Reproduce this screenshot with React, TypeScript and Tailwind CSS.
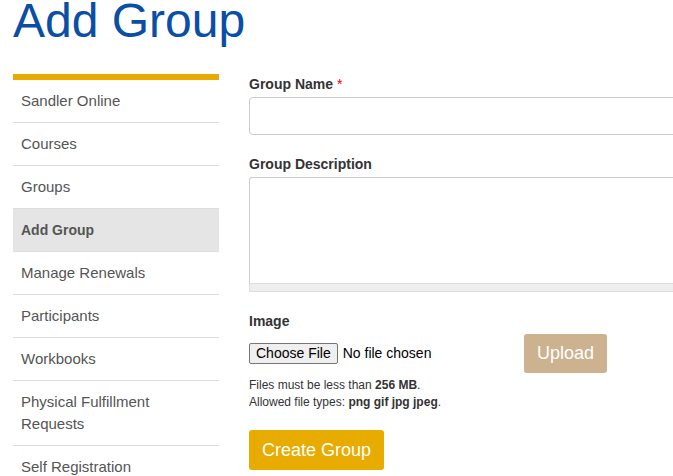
import React from "react";

const items = [
  "Sandler Online",
  "Courses",
  "Groups",
  "Add Group",
  "Manage Renewals",
  "Participants",
  "Workbooks",
  "Physical Fulfillment Requests",
  "Self Registration",
];

export default function App() {
  return (
    <div
      className="w-[673px] h-[476px] overflow-hidden bg-white"
      style={{ fontFamily: '"Liberation Sans", Arial, sans-serif' }}
    >
      <h1 className="ml-[13px] text-[48px] leading-[42px] text-[#0a4ea6] font-normal whitespace-nowrap">
        Add Group
      </h1>
      <div className="flex mt-[32px] ml-[13px]">
        <div className="w-[206px] shrink-0">
          <div className="h-[6px] bg-[#e8a900]" />
          {items.map((it) => (
            <div
              key={it}
              className={
                it === "Add Group"
                  ? "px-2 py-[10px] text-[14px] leading-[22px] font-bold text-[#555] bg-[#e5e5e5] border-b border-[#ddd]"
                  : "px-2 py-[10px] text-[15px] leading-[22px] text-[#555] border-b border-[#ddd]"
              }
            >
              {it}
            </div>
          ))}
        </div>
        <div className="ml-[30px] w-[560px] shrink-0 text-[#333]">
          <div className="text-[14px] leading-[20px] font-bold">
            Group Name <span className="text-[#e00] font-normal">*</span>
          </div>
          <div className="mt-[3px] h-[38px] border border-[#ccc] rounded-[4px] bg-white" />
          <div className="mt-[19px] text-[14px] leading-[20px] font-bold">Group Description</div>
          <div className="mt-[3px] h-[106px] border border-b-0 border-[#ccc] rounded-t-[3px] bg-white" />
          <div className="h-[9px] bg-[#eee] border border-[#ddd]" />
          <div className="mt-[19px] text-[14px] leading-[20px] font-bold">Image</div>
          <div className="mt-[3px] flex items-center h-[39px]">
            <div className="w-[275px] flex items-center text-[14px] leading-[19px]">
              <span className="h-[21px] px-[6px] border border-[#767676] rounded-[2px] bg-[#efefef] text-black flex items-center">
                Choose File
              </span>
              <span className="ml-[5px] text-black">No file chosen</span>
            </div>
            <div className="h-[39px] px-[13px] flex items-center rounded-[3px] bg-[#ccb28f] text-white text-[18px]">
              Upload
            </div>
          </div>
          <div className="mt-[4px] text-[12px] leading-[17px]">
            Files must be less than <b>256 MB</b>.
          </div>
          <div className="text-[12px] leading-[17px]">
            Allowed file types: <b>png gif jpg jpeg</b>.
          </div>
          <div className="mt-[19px] inline-flex h-[40px] px-[13px] items-center rounded-[3px] bg-[#e8ab00] text-white text-[18px]">
            Create Group
          </div>
        </div>
      </div>
    </div>
  );
}
